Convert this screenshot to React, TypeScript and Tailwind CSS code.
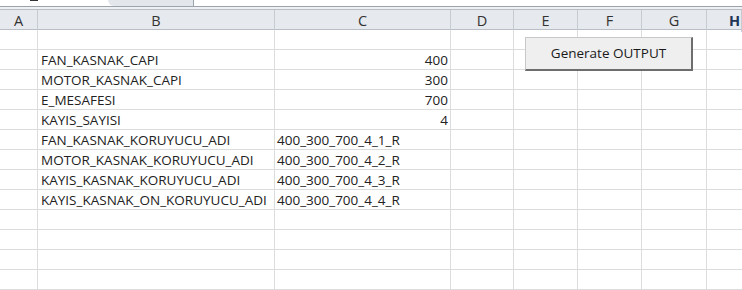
const cols = ['A', 'B', 'C', 'D', 'E', 'F', 'G', 'H'];

const rows: { b?: string; c?: string; num?: boolean }[] = [
  {},
  { b: 'FAN_KASNAK_CAPI', c: '400', num: true },
  { b: 'MOTOR_KASNAK_CAPI', c: '300', num: true },
  { b: 'E_MESAFESI', c: '700', num: true },
  { b: 'KAYIS_SAYISI', c: '4', num: true },
  { b: 'FAN_KASNAK_KORUYUCU_ADI', c: '400_300_700_4_1_R' },
  { b: 'MOTOR_KASNAK_KORUYUCU_ADI', c: '400_300_700_4_2_R' },
  { b: 'KAYIS_KASNAK_KORUYUCU_ADI', c: '400_300_700_4_3_R' },
  { b: 'KAYIS_KASNAK_ON_KORUYUCU_ADI', c: '400_300_700_4_4_R' },
  {},
  {},
  {},
  {},
];

const gridCols = 'grid grid-cols-[38px_237px_176px_63px_64px_64px_65px_1fr]';

export default function App() {
  return (
    <div className="w-[742px] h-[290px] overflow-hidden bg-white text-[#222] font-['Open_Sans','Liberation_Sans',sans-serif]">
      {/* formula bar remnant */}
      <div className="h-[6px] relative bg-white">
        <div className="absolute left-[30px] top-[-3px] w-[8px] h-[4px] bg-[#333]" />
        <div className="absolute left-[108px] top-0 w-[86px] h-[6px] bg-[#e3e6ea] border-r border-[#9aa3ad] rounded-bl-[14px]" />
      </div>
      <div className="h-[1px] bg-[#9ba3ac]" />
      <div className="h-[2px] bg-[#eef0f3]" />
      <div className="h-[1px] bg-[#b8bec6]" />

      {/* column headers */}
      <div className={`${gridCols} h-[20px] bg-[#e6e9ed] border-b border-[#b9bec6]`}>
        {cols.map((c) => (
          <div
            key={c}
            className={`flex items-center justify-center border-r border-[#c6cbd2] text-[14.5px] ${
              c === 'H' ? 'text-[#1f3556] font-bold justify-end pr-[1px]' : 'text-[#333]'
            }`}
          >
            {c}
          </div>
        ))}
      </div>

      {/* sheet rows */}
      <div className="relative">
        {rows.map((r, i) => (
          <div key={i} className={`${gridCols} h-[20px] border-b border-[#dadcdd] text-[13.5px] leading-[18px]`}>
            <div className="border-r border-[#dadcdd]" />
            <div className="border-r border-[#dadcdd] flex items-end pl-[3px] whitespace-nowrap">{r.b}</div>
            <div
              className={`border-r border-[#dadcdd] flex items-end whitespace-nowrap ${
                r.num ? 'justify-end pr-[2px]' : 'pl-[2px]'
              }`}
            >
              {r.c}
            </div>
            <div className="border-r border-[#dadcdd]" />
            <div className="border-r border-[#dadcdd]" />
            <div className="border-r border-[#dadcdd]" />
            <div className="border-r border-[#dadcdd]" />
            <div />
          </div>
        ))}

        <button className="absolute left-[525px] top-[7px] w-[168px] h-[34px] bg-[#efefef] border border-[#c8c8c8] border-r-[#6d6d6d] border-b-[#6d6d6d] border-r-2 border-b-2 text-[13.5px] text-[#1a1a1a]">
          Generate OUTPUT
        </button>
      </div>
    </div>
  );
}
